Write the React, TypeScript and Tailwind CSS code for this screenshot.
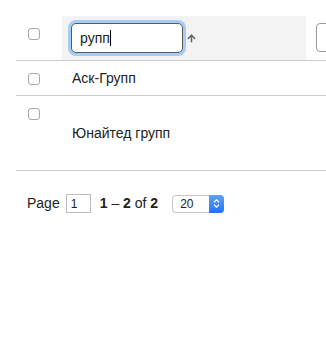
import { ArrowUp } from 'lucide-react';

const rows = [
  { id: 1, name: 'Аск-Групп', tall: false },
  { id: 2, name: 'Юнайтед групп', tall: true },
];

function Box() {
  return <span className="block w-[12px] h-[12px] rounded-[3px] border border-[#a9a9a9] bg-white" />;
}

export default function App() {
  return (
    <div className="pt-[16px] pl-[16px] text-[14px] text-[#222] overflow-hidden" style={{ fontFamily: '"Liberation Sans", Arial, sans-serif' }}>
      <div className="w-[360px]">
        <div className="flex h-[45px] border-b border-[#cbcbcb]">
          <div className="w-[46px] pl-[12px] pt-[12px]">
            <Box />
          </div>
          <div className="w-[244px] bg-[#f3f3f3] flex items-center pl-[9px]">
            <div className="w-[112px] h-[30px] rounded-[5px] border border-[#5a5a5a] ring-[3px] ring-[#a6cdf3] bg-white flex items-center pl-[8px]">
              <span>рупп</span>
              <span className="w-px h-[16px] bg-black" />
            </div>
            <ArrowUp className="w-[11px] h-[11px] ml-[3px] text-[#666]" strokeWidth={3.5} />
          </div>
          <div className="pl-[10px] pt-[7px]">
            <div className="w-[40px] h-[29px] rounded-[4px] border border-[#9a9a9a] bg-white" />
          </div>
        </div>
        {rows.map((r) => (
          <div key={r.id} className={`flex border-b border-[#cbcbcb] ${r.tall ? 'h-[75px]' : 'h-[35px]'}`}>
            <div className="w-[56px] pl-[12px] pt-[12px]">
              <Box />
            </div>
            <div className="flex items-center">{r.name}</div>
          </div>
        ))}
      </div>
      <div className="flex items-center mt-[23px] pl-[11px] h-[19px]">
        <span className="text-[14px]">Page</span>
        <div className="ml-[6px] w-[25px] h-[19px] border border-[#bdbdbd] flex items-center pl-[4px] text-[12px]">1</div>
        <span className="ml-[9px] text-[14px]">
          <b>1</b> – <b>2</b> of <b>2</b>
        </span>
        <div className="ml-[14px] w-[52px] h-[18px] rounded-[4px] border border-[#c8c8c8] bg-white flex items-center justify-between shadow-[0_1px_1px_rgba(0,0,0,0.08)]">
          <span className="pl-[7px] text-[12px]">20</span>
          <div className="w-[15px] h-[18px] -mr-px rounded-r-[4px] bg-gradient-to-b from-[#5ea1f9] to-[#1f73f0] flex flex-col items-center justify-center gap-[1px]">
            <svg width="7" height="4" viewBox="0 0 7 4"><path d="M1 3.2 3.5 0.8 6 3.2" fill="none" stroke="#fff" strokeWidth="1.2" /></svg>
            <svg width="7" height="4" viewBox="0 0 7 4"><path d="M1 0.8 3.5 3.2 6 0.8" fill="none" stroke="#fff" strokeWidth="1.2" /></svg>
          </div>
        </div>
      </div>
    </div>
  );
}
